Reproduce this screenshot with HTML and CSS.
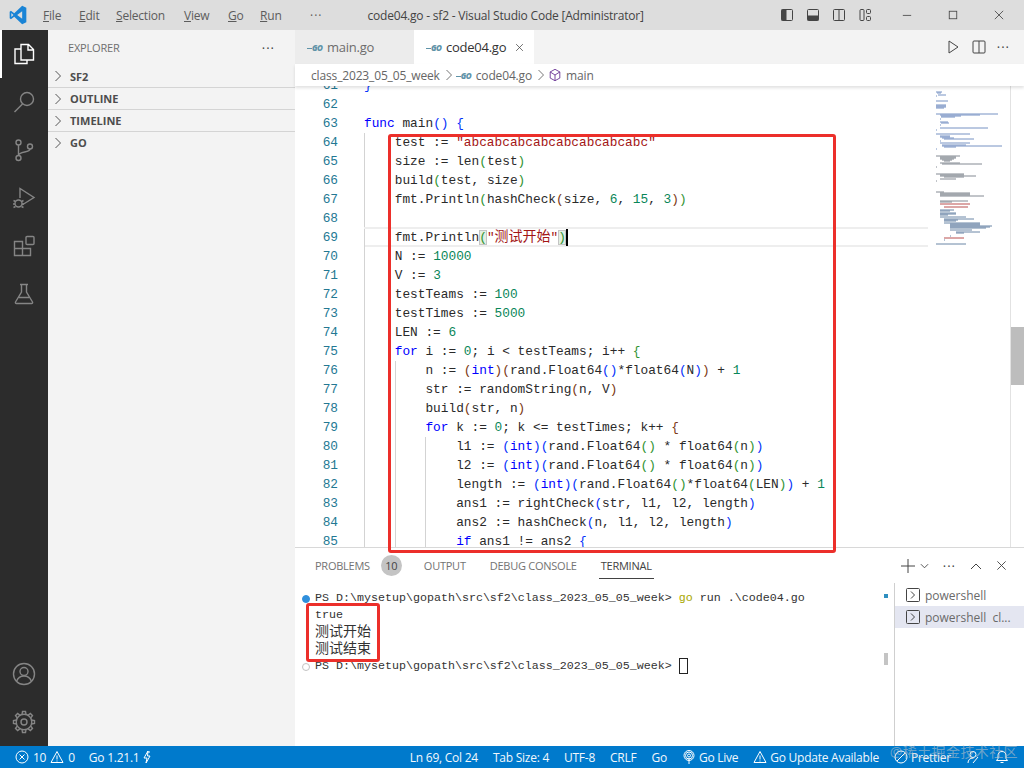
FILE: index.html
```html
<!DOCTYPE html>
<html lang="en">
<head>
    <meta charset="UTF-8">
    <meta name="viewport" content="width=device-width, initial-scale=1.0">
    <title>code04.go - sf2 - Visual Studio Code [Administrator]</title>
    <link rel="stylesheet" href="styles.css">
</head>
<body>

<div class="app">
    <div class="titlebar">
        <svg class="logo" viewBox="0 0 24 24"><path fill-rule="evenodd" fill="#1a84d6" d="M17 1 22 3.4V20.6L17 23 7.5 14 3.5 17 2 16V8L3.5 7 7.5 10ZM17 7.5 11 12 17 16.5ZM4 9.5V14.5L6.5 12Z"/></svg>
        <div class="menu">
            <span class="m-file"><u>F</u>ile</span>
            <span class="m-edit"><u>E</u>dit</span>
            <span class="m-sel"><u>S</u>election</span>
            <span class="m-view"><u>V</u>iew</span>
            <span class="m-go"><u>G</u>o</span>
            <span class="m-run"><u>R</u>un</span>
            <span class="m-more">···</span>
        </div>
        <div class="title">code04.go - sf2 - Visual Studio Code [Administrator]</div>
        <div class="layout-icons">
            <svg viewBox="0 0 16 16"><rect x="2.5" y="2.5" width="11" height="11" rx="1" class="ol"/><rect x="2.5" y="2.5" width="5" height="11" class="sol"/></svg>
            <svg viewBox="0 0 16 16"><rect x="2.5" y="2.5" width="11" height="11" rx="1" class="ol"/><rect x="2.5" y="8.5" width="11" height="5" class="sol"/></svg>
            <svg viewBox="0 0 16 16"><rect x="2.5" y="2.5" width="11" height="11" rx="1" class="ol"/><path d="M8 2.5v11" class="ol"/></svg>
            <svg viewBox="0 0 16 16"><rect x="3" y="2.5" width="4" height="11" rx="1" class="ol"/><rect x="9.5" y="2.5" width="4" height="4" rx="1" class="ol"/><rect x="9.5" y="9.5" width="4" height="4" rx="1" class="ol"/></svg>
        </div>
        <div class="win-btns">
            <svg viewBox="0 0 12 12"><path d="M1 6.5h10" class="ol"/></svg>
            <svg viewBox="0 0 12 12"><rect x="1.5" y="1.5" width="9" height="9" class="ol"/></svg>
            <svg viewBox="0 0 12 12"><path d="M1 1l10 10M11 1L1 11" class="ol"/></svg>
        </div>
    </div>

    <div class="main">
        <div class="activity">
            <div class="act active">
                <svg viewBox="0 0 24 24"><path d="M9 2.5h7.5l5 5V18H9zM16 2.5V8h5.5M9 7H3v14.500h12V18"/></svg>
            </div>
            <div class="act">
                <svg viewBox="0 0 24 24"><circle cx="15" cy="9" r="6.500"/><path d="M10.500 14 2.500 22"/></svg>
            </div>
            <div class="act">
                <svg viewBox="0 0 24 24"><circle cx="6.500" cy="4.500" r="2.500"/><circle cx="18" cy="8.500" r="2.500"/><circle cx="6.500" cy="20" r="2.500"/><path d="M6.500 7V17.500M18 11C18 15 7 13 6.500 17.500"/></svg>
            </div>
            <div class="act">
                <svg viewBox="0 0 24 24"><path d="M8 12V2.500L22 11.500 10 19"/><circle cx="6.500" cy="17.500" r="3.500"/><path d="M1.500 14.500l2 1M1 18h2M1.500 21.500l2-1M11.500 14.500l-2 1M12 18h-2M11.500 21.500l-2-1"/></svg>
            </div>
            <div class="act">
                <svg viewBox="0 0 24 24"><path d="M2.500 7.500h8v14h-8zM2.500 14.500h16v7h-8M10.500 7.500v7"/><rect x="14" y="2.500" width="8" height="8" rx="1"/></svg>
            </div>
            <div class="act">
                <svg viewBox="0 0 24 24"><path d="M8 2.500h8M9.500 2.500V10L3.500 20a1 1 0 0 0 1 1.500h15a1 1 0 0 0 1-1.500L14.500 10V2.500M7 15.500h10"/></svg>
            </div>
            <div class="act-bottom">
                <div class="act">
                    <svg viewBox="0 0 24 24"><circle cx="12" cy="12" r="10.500"/><circle cx="12" cy="9.500" r="4"/><path d="M4.500 19.500C6 15.500 9 14 12 14s6 1.500 7.500 5.500"/></svg>
                </div>
                <div class="act">
                    <svg viewBox="0 0 24 24">
                        <defs><path id="tooth" d="M10 4.600 10.500 1.500h3L14 4.600"/></defs>
                        <circle cx="12" cy="12" r="7.800"/><circle cx="12" cy="12" r="3"/>
                        <use href="#tooth"/>
                        <use href="#tooth" transform="rotate(45 12 12)"/>
                        <use href="#tooth" transform="rotate(90 12 12)"/>
                        <use href="#tooth" transform="rotate(135 12 12)"/>
                        <use href="#tooth" transform="rotate(180 12 12)"/>
                        <use href="#tooth" transform="rotate(225 12 12)"/>
                        <use href="#tooth" transform="rotate(270 12 12)"/>
                        <use href="#tooth" transform="rotate(315 12 12)"/>
                    </svg>
                </div>
            </div>
        </div>

        <div class="sidebar">
            <div class="side-head"><span>EXPLORER</span><span class="side-more">···</span></div>
            <div class="section first"><svg class="chev" viewBox="0 0 8 12"><path d="M1.500 1l5 5-5 5"/></svg>SF2</div>
            <div class="section"><svg class="chev" viewBox="0 0 8 12"><path d="M1.500 1l5 5-5 5"/></svg>OUTLINE</div>
            <div class="section"><svg class="chev" viewBox="0 0 8 12"><path d="M1.500 1l5 5-5 5"/></svg>TIMELINE</div>
            <div class="section"><svg class="chev" viewBox="0 0 8 12"><path d="M1.500 1l5 5-5 5"/></svg>GO</div>
        </div>

        <div class="workbench">
            <div class="tabs">
                <div class="tab"><span class="go-icon">GO</span>main.go</div>
                <div class="tab on"><span class="go-icon">GO</span>code04.go<svg class="tab-x" viewBox="0 0 12 12"><path d="M1.500 1.500l9 9M10.500 1.500l-9 9"/></svg></div>
                <div class="tab-actions">
                    <svg viewBox="0 0 16 16"><path d="M4 2l9 6-9 6z"/></svg>
                    <svg viewBox="0 0 16 16"><rect x="2" y="2" width="12" height="12" rx="1"/><path d="M8 2v12"/></svg>
                    <span>···</span>
                </div>
            </div>
            <div class="crumbs">
                <span>class_2023_05_05_week</span>
                <svg class="crumb-sep" viewBox="0 0 8 12"><path d="M1.500 1l5 5-5 5"/></svg>
                <span class="go-icon">GO</span><span>code04.go</span>
                <svg class="crumb-sep" viewBox="0 0 8 12"><path d="M1.500 1l5 5-5 5"/></svg>
                <svg class="cube" viewBox="0 0 16 16"><path d="M8 1.500l5.500 3v7L8 14.500l-5.500-3v-7zM2.500 4.500 8 8l5.500-3.500M8 8v6.500"/></svg>
                <span>main</span>
            </div>

            <div class="editor">
                <div class="code">
                    <div class="line"><span class="ln">61</span><span class="txt"><span class="b1">}</span></span></div>
                    <div class="line"><span class="ln">62</span><span class="txt"></span></div>
                    <div class="line"><span class="ln">63</span><span class="txt"><span class="k">func</span> main<span class="b1">()</span> <span class="b1">{</span></span></div>
                    <div class="line"><span class="ln">64</span><span class="txt"><i class="ind"></i>test := <span class="s">"abcabcabcabcabcabcabcabc"</span></span></div>
                    <div class="line"><span class="ln">65</span><span class="txt"><i class="ind"></i>size := len<span class="b2">(</span>test<span class="b2">)</span></span></div>
                    <div class="line"><span class="ln">66</span><span class="txt"><i class="ind"></i>build<span class="b2">(</span>test, size<span class="b2">)</span></span></div>
                    <div class="line"><span class="ln">67</span><span class="txt"><i class="ind"></i>fmt.Println<span class="b2">(</span>hashCheck<span class="b3">(</span>size, <span class="n">6</span>, <span class="n">15</span>, <span class="n">3</span><span class="b3">)</span><span class="b2">)</span></span></div>
                    <div class="line"><span class="ln">68</span><span class="txt"><i class="ind"></i></span></div>
                    <div class="line cur"><span class="ln">69</span><span class="txt"><i class="ind"></i>fmt.Println<span class="match">(</span><span class="s">"<span class="cjk">测试开始</span>"</span><span class="match">)</span><b class="caret"></b></span></div>
                    <div class="line"><span class="ln">70</span><span class="txt"><i class="ind"></i>N := <span class="n">10000</span></span></div>
                    <div class="line"><span class="ln">71</span><span class="txt"><i class="ind"></i>V := <span class="n">3</span></span></div>
                    <div class="line"><span class="ln">72</span><span class="txt"><i class="ind"></i>testTeams := <span class="n">100</span></span></div>
                    <div class="line"><span class="ln">73</span><span class="txt"><i class="ind"></i>testTimes := <span class="n">5000</span></span></div>
                    <div class="line"><span class="ln">74</span><span class="txt"><i class="ind"></i>LEN := <span class="n">6</span></span></div>
                    <div class="line"><span class="ln">75</span><span class="txt"><i class="ind"></i><span class="k">for</span> i := <span class="n">0</span>; i &lt; testTeams; i++ <span class="b2">{</span></span></div>
                    <div class="line"><span class="ln">76</span><span class="txt"><i class="ind"></i><i class="ind"></i>n := <span class="b3">(</span><span class="k">int</span><span class="b3">)(</span>rand.Float64<span class="b1">()</span>*float64<span class="b1">(</span>N<span class="b1">)</span><span class="b3">)</span> + <span class="n">1</span></span></div>
                    <div class="line"><span class="ln">77</span><span class="txt"><i class="ind"></i><i class="ind"></i>str := randomString<span class="b3">(</span>n, V<span class="b3">)</span></span></div>
                    <div class="line"><span class="ln">78</span><span class="txt"><i class="ind"></i><i class="ind"></i>build<span class="b3">(</span>str, n<span class="b3">)</span></span></div>
                    <div class="line"><span class="ln">79</span><span class="txt"><i class="ind"></i><i class="ind"></i><span class="k">for</span> k := <span class="n">0</span>; k &lt;= testTimes; k++ <span class="b3">{</span></span></div>
                    <div class="line"><span class="ln">80</span><span class="txt"><i class="ind"></i><i class="ind"></i><i class="ind"></i>l1 := <span class="b1">(</span><span class="k">int</span><span class="b1">)(</span>rand.Float64<span class="b2">()</span> * float64<span class="b2">(</span>n<span class="b2">)</span><span class="b1">)</span></span></div>
                    <div class="line"><span class="ln">81</span><span class="txt"><i class="ind"></i><i class="ind"></i><i class="ind"></i>l2 := <span class="b1">(</span><span class="k">int</span><span class="b1">)(</span>rand.Float64<span class="b2">()</span> * float64<span class="b2">(</span>n<span class="b2">)</span><span class="b1">)</span></span></div>
                    <div class="line"><span class="ln">82</span><span class="txt"><i class="ind"></i><i class="ind"></i><i class="ind"></i>length := <span class="b1">(</span><span class="k">int</span><span class="b1">)(</span>rand.Float64<span class="b2">()</span>*float64<span class="b2">(</span>LEN<span class="b2">)</span><span class="b1">)</span> + <span class="n">1</span></span></div>
                    <div class="line"><span class="ln">83</span><span class="txt"><i class="ind"></i><i class="ind"></i><i class="ind"></i>ans1 := rightCheck<span class="b1">(</span>str, l1, l2, length<span class="b1">)</span></span></div>
                    <div class="line"><span class="ln">84</span><span class="txt"><i class="ind"></i><i class="ind"></i><i class="ind"></i>ans2 := hashCheck<span class="b1">(</span>n, l1, l2, length<span class="b1">)</span></span></div>
                    <div class="line"><span class="ln">85</span><span class="txt"><i class="ind"></i><i class="ind"></i><i class="ind"></i><span class="k">if</span> ans1 != ans2 <span class="b1">{</span></span></div>
                </div>
                <div class="minimap">
                    <svg viewBox="0 0 66 190" width="66" height="190">
                        <path stroke="#4a6fb0" d="M0 2h6M1 3h4M2 5h8M0 6h1M0 11h12M0 15h10M0 16h10M0 17h10M0 18h8M0 24h62M4 25h40M5 26h20M5 27h14M4 29h1M4 32h8M5 33h8M4 35h1M4 38h48M0 40h1M0 44h34M4 46h10M4 47h10M6 48h12M8 49h30M4 51h1M4 53h30M6 55h24M6 56h60M8 57h12M0 59h1"/>
                        <path stroke="#5c6470" d="M0 66h24M4 67h16M4 68h16M4 69h14M6 70h10M8 71h6M4 73h20M6 74h40M0 77h1M0 84h28M4 85h24M4 86h36M8 87h20M4 89h16M0 91h1M0 102h8M4 103h30M4 104h30M4 105h30M4 106h44M4 111h28M4 112h12"/>
                        <path stroke="#a31515" d="M4 114h30M8 117h24M8 148h20"/>
                        <path stroke="#3b5f8a" d="M4 120h14M4 121h10M4 123h16M4 124h16M4 125h8M4 127h26M8 129h30M8 130h14M8 131h12M8 133h36M14 134h30M14 135h30M14 136h42M14 137h40M14 138h36M14 140h22M20 142h24M20 143h8M14 146h1M8 150h1M0 154h30"/>
                    </svg>
                </div>
                <div class="v-scroll"><div class="v-thumb"></div></div>
            </div>

            <div class="panel">
                <div class="panel-tabs">
                    <span class="ptab">PROBLEMS</span><span class="pbadge">10</span>
                    <span class="ptab">OUTPUT</span>
                    <span class="ptab">DEBUG CONSOLE</span>
                    <span class="ptab on">TERMINAL</span>
                    <div class="panel-actions">
                        <svg class="plus" viewBox="0 0 14 14"><path d="M7 0v14M0 7h14"/></svg>
                        <svg class="dn" viewBox="0 0 10 6"><path d="M1 1l4 4 4-4"/></svg>
                        <span class="dots">···</span>
                        <svg class="up" viewBox="0 0 12 8"><path d="M1 7l5-5 5 5"/></svg>
                        <svg class="cl" viewBox="0 0 12 12"><path d="M1.500 1.500l9 9M10.500 1.500l-9 9"/></svg>
                    </div>
                </div>
                <div class="panel-body">
                    <div class="term">
                        <div class="tline"><i class="dot blue"></i>PS D:\mysetup\gopath\src\sf2\class_2023_05_05_week&gt; <span class="cmd">go</span> run .\code04.go</div>
                        <div class="tline">true</div>
                        <div class="tline cjk-t">测试开始</div>
                        <div class="tline cjk-t">测试结束</div>
                        <div class="tline"><i class="dot"></i>PS D:\mysetup\gopath\src\sf2\class_2023_05_05_week&gt; <b class="tcaret"></b></div>
                        <i class="mark m-blue"></i>
                        <i class="mark m-grey"></i>
                    </div>
                    <div class="shells">
                        <div class="shell"><svg viewBox="0 0 14 14"><rect x=".5" y=".5" width="13" height="13" rx="1"/><path d="M5 3.500 8.500 7 5 10.500"/></svg>powershell</div>
                        <div class="shell on"><svg viewBox="0 0 14 14"><rect x=".5" y=".5" width="13" height="13" rx="1"/><path d="M5 3.500 8.500 7 5 10.500"/></svg>powershell<span class="cl-txt">cl...</span></div>
                    </div>
                </div>
            </div>
        </div>
    </div>

    <div class="statusbar">
        <svg class="st-ic err" viewBox="0 0 14 14"><circle cx="7" cy="7" r="6"/><path d="M4.500 4.500l5 5M9.500 4.500l-5 5"/></svg>
        <span class="st-10">10</span>
        <svg class="st-ic warn" viewBox="0 0 14 14"><path d="M7 1.500 13 12.500H1zM7 5.500v4M7 10.500v1"/></svg>
        <span class="st-0">0</span>
        <span class="st-go">Go 1.21.1</span>
        <svg class="st-ic bolt" viewBox="0 0 10 14"><path d="M6 1 2 8h3l-1 5 4-7H5.500zM8 2 5 2"/></svg>
        <div class="st-right">
            <span>Ln 69, Col 24</span>
            <span>Tab Size: 4</span>
            <span>UTF-8</span>
            <span>CRLF</span>
            <span>Go</span>
            <span class="st-i"><svg class="st-ic" viewBox="0 0 14 14"><circle cx="7" cy="5.500" r="1.500"/><circle cx="7" cy="5.500" r="3.500"/><circle cx="7" cy="5.500" r="5"/><path d="M7 8v6"/></svg>Go Live</span>
            <span class="st-i"><svg class="st-ic" viewBox="0 0 14 14"><path d="M7 1.500 13 12.500H1zM7 5.500v4M7 10.500v1"/></svg>Go Update Available</span>
            <span class="st-i"><svg class="st-ic" viewBox="0 0 14 14"><circle cx="7" cy="7" r="6"/><path d="M3 11l8-8"/></svg>Prettier</span>
            <svg class="st-ic" viewBox="0 0 14 14"><circle cx="7" cy="4.500" r="3"/><path d="M2 13c0-3 2-5 5-5M12 7l-5 6"/></svg>
            <svg class="st-ic" viewBox="0 0 14 14"><path d="M7 1.500c3 0 4 2 4 4v3l1.500 2h-11L3 8.500v-3c0-2 1-4 4-4zM5.500 12.500h3"/></svg>
        </div>
    </div>

    <div class="redbox box-code"></div>
    <div class="redbox box-term"></div>
    <div class="watermark">@稀土掘金技术社区</div>
</div>

</body>
</html>
```

FILE: styles.css
```css
* {
    box-sizing: border-box;
}

body {
    margin: 0;
    background: #fff;
    font-family: "Open Sans", "Noto Sans CJK SC", sans-serif;
    overflow: hidden;
}

.app {
    position: relative;
    width: 1024px;
    height: 768px;
    display: flex;
    flex-direction: column;
    overflow: hidden;
}

svg {
    fill: none;
    flex: none;
}

/* title bar */
.titlebar {
    height: 30px;
    flex: none;
    display: flex;
    align-items: center;
    background: #dddddd;
    color: #555;
    font-size: 12px;
    letter-spacing: -0.2px;
}

.logo {
    width: 20px;
    height: 20px;
    margin-left: 8px;
}

.menu {
    display: flex;
    margin-left: 15px;
    color: #5c5c5c;
}

.m-file { width: 36px; }
.m-edit { width: 37px; }
.m-sel { width: 68px; }
.m-view { width: 44px; }
.m-go { width: 32px; }
.m-run { width: 50px; }
.m-more { letter-spacing: 1px; }

.title {
    margin-left: 45px;
    width: 412px;
    color: #444;
}

.layout-icons {
    display: flex;
    gap: 10px;
}

.layout-icons svg {
    width: 16px;
    height: 16px;
}

.ol {
    stroke: #444;
    stroke-width: 1;
    fill: none;
}

.sol {
    fill: #444;
}

.win-btns {
    display: flex;
    gap: 36px;
    margin-left: 29px;
}

.win-btns svg {
    width: 10px;
    height: 10px;
}

.main {
    flex: 1;
    min-height: 0;
    display: flex;
}

/* activity bar */
.activity {
    width: 48px;
    flex: none;
    background: #2c2c2c;
    display: flex;
    flex-direction: column;
}

.act {
    height: 48px;
    display: flex;
    align-items: center;
    justify-content: center;
}

.act svg {
    width: 24px;
    height: 24px;
    stroke: #858585;
    stroke-width: 1.4;
}

.act.active {
    border-left: 2px solid #fff;
    padding-right: 2px;
}

.act.active svg {
    stroke: #fff;
}

.act-bottom {
    margin-top: auto;
}

/* sidebar */
.sidebar {
    width: 247px;
    flex: none;
    background: #f3f3f3;
    color: #444;
    font-size: 11px;
}

.side-head {
    height: 35px;
    padding: 0 20px;
    display: flex;
    align-items: center;
    justify-content: space-between;
    color: #6f6f6f;
    letter-spacing: -0.2px;
}

.side-more {
    font-size: 13px;
    letter-spacing: 1px;
    color: #444;
    margin-right: 0;
}

.section {
    height: 22px;
    display: flex;
    align-items: center;
    font-weight: 700;
    color: #4d4d4d;
    border-top: 1px solid #d4d4d4;
}

.section.first {
    border-top: none;
}

.chev {
    width: 8px;
    height: 12px;
    margin: 0 8px 0 6px;
    stroke: #555;
    stroke-width: 1;
}

/* editor column */
.workbench {
    flex: 1;
    min-width: 0;
    display: flex;
    flex-direction: column;
}

.tabs {
    height: 34px;
    flex: none;
    display: flex;
    background: #f3f3f3;
    font-size: 13px;
    letter-spacing: -0.25px;
}

.tab {
    width: 119px;
    display: flex;
    align-items: center;
    padding-left: 12px;
    background: #ececec;
    color: #6c6c6c;
}

.tab.on {
    width: 120px;
    background: #fff;
    color: #333;
}

.tab-x {
    width: 9px;
    height: 9px;
    margin-left: 9px;
    stroke: #444;
    stroke-width: 1;
}

.go-icon {
    position: relative;
    width: 18px;
    margin-right: 2px;
    padding-left: 5px;
    color: #5f93a8;
    font-size: 8px;
    font-weight: 800;
    font-style: italic;
    letter-spacing: -0.6px;
    flex: none;
}

.go-icon::before {
    content: "";
    position: absolute;
    left: 0;
    top: 6px;
    width: 5px;
    height: 1px;
    background: #5f93a8;
}

.tab-actions {
    margin-left: auto;
    display: flex;
    align-items: center;
    gap: 10px;
    padding-right: 14px;
    color: #444;
}

.tab-actions svg {
    width: 16px;
    height: 16px;
    stroke: #444;
    stroke-width: 1;
}

.tab-actions span {
    letter-spacing: 1px;
    font-size: 13px;
}

.crumbs {
    height: 22px;
    flex: none;
    position: relative;
    z-index: 1;
    display: flex;
    align-items: center;
    padding-left: 16px;
    background: #fff;
    box-shadow: 0 2px 3px rgba(0, 0, 0, 0.12);
    color: #666;
    font-size: 12px;
    letter-spacing: -0.15px;
}

.crumb-sep {
    width: 8px;
    height: 12px;
    margin: 0 3px 0 5px;
    stroke: #777;
    stroke-width: 1;
}

.cube {
    width: 14px;
    height: 14px;
    margin-right: 4px;
    stroke: #652d90;
    stroke-width: 1;
}

.editor {
    height: 461px;
    flex: none;
    display: flex;
    overflow: hidden;
    background: #fff;
}

.code {
    width: 633px;
    flex: none;
    margin-top: -10px;
    font-family: "Liberation Mono", "Noto Sans CJK SC", monospace;
    font-size: 12.8px;
    color: #2a2a2a;
}

.line {
    height: 19px;
    line-height: 19px;
    display: flex;
    white-space: pre;
}

.ln {
    width: 43px;
    flex: none;
    text-align: right;
    color: #237893;
}

.txt {
    flex: 1;
    margin-left: 26px;
}

.line.cur .txt {
    height: 20px;
    margin-top: -1px;
    line-height: 20px;
    border-top: 2px solid #eeeeee;
    border-bottom: 2px solid #eeeeee;
}

.line.cur .txt {
    line-height: 17px;
}

.ind {
    display: inline-block;
    width: 30.72px;
    height: 19px;
    vertical-align: top;
    border-left: 1px solid #d3d3d3;
}

.k { color: #0000ff; }
.s { color: #a31515; }
.n { color: #098658; }
.b1 { color: #0431fa; }
.b2 { color: #319331; }
.b3 { color: #7b3814; }

.cjk {
    font-size: 14px;
}

.match {
    background: #e2efe2;
    outline: 1px solid #c4c4c4;
    outline-offset: -1px;
    color: #319331;
}

.caret {
    display: inline-block;
    width: 2px;
    height: 17px;
    margin-left: 0;
    vertical-align: top;
    background: #000;
}

.minimap {
    width: 82px;
    flex: none;
    padding: 4px 0 0 8px;
}

.minimap svg {
    display: block;
    stroke-width: 1;
    opacity: 0.75;
}

.v-scroll {
    width: 14px;
    flex: none;
    border-left: 1px solid #e2e2e2;
    padding-top: 241px;
}

.v-thumb {
    height: 58px;
    background: #bdbdbd;
}

/* panel */
.panel {
    flex: 1;
    min-height: 0;
    display: flex;
    flex-direction: column;
    border-top: 1px solid #d8d8d8;
    background: #fff;
}

.panel-tabs {
    height: 35px;
    flex: none;
    display: flex;
    align-items: center;
    padding-left: 20px;
    font-size: 11px;
    letter-spacing: -0.25px;
    color: #737373;
}

.ptab {
    margin-right: 24px;
}

.ptab.on {
    position: relative;
    color: #424242;
}

.ptab.on::after {
    content: "";
    position: absolute;
    left: -2px;
    right: -2px;
    bottom: -6px;
    height: 1px;
    background: #424242;
}

.pbadge {
    width: 21px;
    height: 21px;
    margin: 0 22px 0 -13px;
    border-radius: 50%;
    background: #c4c4c4;
    color: #444;
    text-align: center;
    line-height: 21px;
}

.panel-actions {
    margin-left: auto;
    display: flex;
    align-items: center;
    color: #444;
}

.panel-actions svg {
    stroke: #444;
    stroke-width: 1;
}

.plus { width: 14px; height: 14px; margin-right: 5px; }
.dn { width: 9px; height: 6px; margin-right: 14px; }
.dots { font-size: 13px; letter-spacing: 1px; margin-right: 14px; }
.up { width: 12px; height: 8px; margin-right: 14px; }
.cl { width: 11px; height: 11px; margin-right: 17px; }

.panel-body {
    flex: 1;
    min-height: 0;
    display: flex;
}

.term {
    position: relative;
    width: 599px;
    flex: none;
    padding: 7px 0 0 20px;
    font-family: "Liberation Mono", "Noto Sans CJK SC", monospace;
    font-size: 11.67px;
    color: #333;
}

.tline {
    position: relative;
    height: 17px;
    line-height: 17px;
    white-space: pre;
}

.cjk-t {
    font-size: 14px;
}

.cmd {
    color: #a8a800;
}

.dot {
    position: absolute;
    left: -13px;
    top: 5px;
    width: 8px;
    height: 8px;
    border-radius: 50%;
    border: 1px solid #c2c2c2;
}

.dot.blue {
    background: #2f8fdc;
    border-color: #2f8fdc;
}

.tcaret {
    display: inline-block;
    width: 9px;
    height: 16px;
    vertical-align: top;
    border: 1px solid #222;
}

.mark {
    position: absolute;
    left: 589px;
    width: 4px;
}

.m-blue {
    top: 11px;
    height: 4px;
    background: #2f8fc0;
}

.m-grey {
    top: 70px;
    height: 12px;
    background: #c4c4c4;
}

.shells {
    flex: 1;
    border-left: 1px solid #cfcfcf;
    padding-top: 1px;
    font-size: 12px;
    color: #6a6a6a;
}

.shell {
    height: 22px;
    display: flex;
    align-items: center;
    padding-left: 11px;
    white-space: nowrap;
}

.shell.on {
    background: #e4e6f1;
}

.shell svg {
    width: 14px;
    height: 14px;
    margin-right: 5px;
    stroke: #444;
    stroke-width: 1;
}

.cl-txt {
    margin-left: 6px;
}

/* status bar */
.statusbar {
    height: 22px;
    flex: none;
    display: flex;
    align-items: center;
    padding-left: 15px;
    background: #007acc;
    color: #f2f8fc;
    font-size: 12px;
    letter-spacing: -0.25px;
}

.st-ic {
    width: 14px;
    height: 14px;
    stroke: #fff;
    stroke-width: 1;
}

.st-10 { margin: 0 4px 0 4px; }
.st-0 { margin-left: 4px; }
.st-go { margin-left: 14px; }
.bolt { width: 10px; margin-left: 3px; }

.st-right {
    margin-left: auto;
    display: flex;
    align-items: center;
    gap: 15px;
    padding-right: 15px;
}

.st-i {
    display: flex;
    align-items: center;
    gap: 3px;
}

/* annotations drawn on the screenshot */
.redbox {
    position: absolute;
    border: 3px solid #ec2f2a;
    border-radius: 3px;
}

.box-code {
    left: 388px;
    top: 134px;
    width: 448px;
    height: 419px;
}

.box-term {
    left: 306px;
    top: 603px;
    width: 74px;
    height: 59px;
}

.watermark {
    position: absolute;
    right: 6px;
    top: 741px;
    color: rgba(200, 200, 200, 0.55);
    font-size: 14px;
    letter-spacing: 0.4px;
}
```
